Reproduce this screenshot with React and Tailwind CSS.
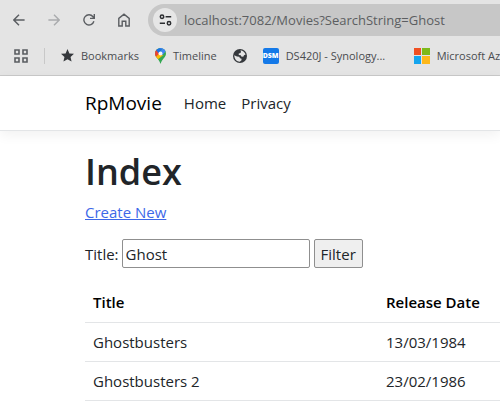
import React from "react";

const movies = [
  { title: "Ghostbusters", date: "13/03/1984" },
  { title: "Ghostbusters 2", date: "23/02/1986" },
];

function BackIcon() {
  return (
    <svg className="size-3" viewBox="0 0 12 12" fill="none" stroke="currentColor" strokeWidth="1.4">
      <path d="M11.6 6H1M6 .8.8 6 6 11.2" />
    </svg>
  );
}

function ForwardIcon() {
  return (
    <svg className="size-3" viewBox="0 0 12 12" fill="none" stroke="currentColor" strokeWidth="1.4">
      <path d="M.4 6H11M6 .8 11.2 6 6 11.2" />
    </svg>
  );
}

function ReloadIcon() {
  return (
    <svg className="size-3" viewBox="0 0 12 12" fill="none" stroke="currentColor" strokeWidth="1.4">
      <path d="M10.9 7.3A5.1 5.1 0 1 1 10 2.7L11.3 4.4M11.3 0V4.4H7" />
    </svg>
  );
}

function HomeIcon() {
  return (
    <svg className="h-[14px] w-3" viewBox="0 0 12 14" fill="none" stroke="currentColor" strokeWidth="1.4">
      <path d="M.8 13V5.4L6 1.2l5.2 4.2V13H7.8V8.2H4.2V13Z" />
    </svg>
  );
}

function TuneIcon() {
  return (
    <svg className="h-3 w-[13px]" viewBox="0 0 13 12" fill="none" stroke="currentColor" strokeWidth="1.5">
      <circle cx="3" cy="2.7" r="1.7" />
      <path d="M6.6 2.7h5.6M.8 9.3h5.2" />
      <circle cx="10" cy="9.3" r="1.7" />
    </svg>
  );
}

function AppsIcon() {
  return (
    <svg className="size-[14px]" viewBox="0 0 14 14" fill="none" stroke="currentColor" strokeWidth="1.6">
      <path d="M1 1h4v4H1zM9 1h4v4H9zM1 9h4v4H1zM9 9h4v4H9z" />
    </svg>
  );
}

function StarIcon() {
  return (
    <svg className="size-[13px] text-[#35383c]" viewBox="0 0 24 24" fill="currentColor">
      <path d="m12 0 3.5 8.1 8.5.8-6.4 5.8 1.9 8.6L12 18.8l-7.5 4.5 1.9-8.6L0 8.9l8.5-.8Z" />
    </svg>
  );
}

function PinIcon() {
  return (
    <svg className="h-4 w-[11px]" viewBox="0 0 22 32">
      <defs>
        <clipPath id="pin-outline">
          <path d="M11 0A11 11 0 0 0 0 11c0 4 2 6.5 4.500 9.500S9.500 27 11 32c1.500-5 4-8.500 6.500-11.500S22 15 22 11A11 11 0 0 0 11 0Z" />
        </clipPath>
      </defs>
      <g clipPath="url(#pin-outline)">
        <path fill="#34a853" d="M0 0h22v32H0z" />
        <path fill="#fbbc04" d="M0 16 7 10l10 4L4 24H0z" />
        <path fill="#ea4335" d="M0 2 3 3l7 6-8 9H0z" />
        <path fill="#1a73e8" d="M2 4 7 0h8l-7 11z" />
        <path fill="#4285f4" d="M9 0h13v6l-8 9-5-6 5-6z" />
      </g>
      <circle cx="11" cy="11" r="4" fill="#f5f6f8" />
    </svg>
  );
}

function GlobeIcon() {
  return (
    <svg className="size-[14px] text-[#35383c]" viewBox="0 0 28 28">
      <circle cx="14" cy="14" r="14" fill="currentColor" />
      <path
        fill="#e4e4e4"
        d="M15 2.500c5 .5 9 4 10.200 8.500l-3.200 1.500-1.500 3-4-.5-1-2.500-4-.5v-3l3.500-1 1-2.500ZM2.500 12.500 8 15l4.500.5 1.500 3 3 1v3l-3.500 3C8 25.500 2.500 20 2.500 12.500Z"
      />
    </svg>
  );
}

function MicrosoftIcon() {
  return (
    <span className="grid size-4 shrink-0 grid-cols-2 gap-px">
      <span className="bg-[#f05022]" />
      <span className="bg-[#7db91a]" />
      <span className="bg-[#15a5ee]" />
      <span className="bg-[#fdb81b]" />
    </span>
  );
}

function ToolButton({ label, disabled, children }) {
  return (
    <button
      type="button"
      aria-label={label}
      disabled={disabled}
      className="flex h-8 w-[35px] items-center justify-center text-[#5a5d61] disabled:text-[#a9abad]"
    >
      {children}
    </button>
  );
}

function Bookmark({ icon, label, children }) {
  return (
    <a href="#" aria-label={label} className="flex shrink-0 items-center gap-[7px] whitespace-nowrap">
      {icon}
      {children}
    </a>
  );
}

function BrowserChrome() {
  return (
    <div className="overflow-hidden border-b border-[#c9c9c9] bg-[#e4e4e4] pt-1 pb-2 text-[#4a4c50]">
      <div className="flex items-center pl-px">
        <ToolButton label="Back"><BackIcon /></ToolButton>
        <ToolButton label="Forward" disabled><ForwardIcon /></ToolButton>
        <ToolButton label="Reload"><ReloadIcon /></ToolButton>
        <ToolButton label="Home"><HomeIcon /></ToolButton>
        <div className="ml-[7px] flex h-8 flex-1 items-center gap-[7px] rounded-l-full bg-[#c7c7c7] pl-[5px]">
          <button
            type="button"
            aria-label="View site information"
            className="flex size-6 shrink-0 items-center justify-center rounded-full bg-[#e6e6e6] text-[#2b2d30]"
          >
            <TuneIcon />
          </button>
          <input
            type="text"
            aria-label="Address"
            defaultValue="localhost:7082/Movies?SearchString=Ghost"
            className="w-full min-w-0 bg-transparent text-[13px] text-[#5c5e61] outline-none"
          />
        </div>
      </div>
      <nav aria-label="Bookmarks" className="mt-2 flex h-[23px] items-center pl-[14px] text-[11px]">
        <button type="button" aria-label="Apps" className="shrink-0 text-[#5a5d61]"><AppsIcon /></button>
        <span className="ml-4 h-4 w-px shrink-0 bg-[#c8c8c8]" />
        <div className="ml-4 flex gap-4">
          <Bookmark icon={<StarIcon />}>Bookmarks</Bookmark>
          <Bookmark icon={<PinIcon />}>Timeline</Bookmark>
          <Bookmark icon={<GlobeIcon />} label="Website" />
          <Bookmark
            icon={
              <span className="flex size-4 items-center justify-center rounded-xs bg-[#1479e8] text-[7px] font-extrabold text-white">
                DSM
              </span>
            }
          >
            <span className="w-28">DS420J - Synology...</span>
          </Bookmark>
          <Bookmark icon={<MicrosoftIcon />}>Microsoft Az</Bookmark>
        </div>
      </nav>
    </div>
  );
}

export default function App() {
  return (
    <div className="overflow-hidden bg-white font-['Open_Sans','Noto_Sans',sans-serif] text-[15px] leading-6 text-[#212529]">
      <BrowserChrome />
      <header className="flex h-[55px] items-center border-b border-[#e3e5e7] pl-[85px] shadow-[0_4px_12px_rgba(0,0,0,0.06)]">
        <a href="#" className="text-[19px] text-black">RpMovie</a>
        <nav className="ml-[22px] flex gap-[15px]">
          <a href="#">Home</a>
          <a href="#">Privacy</a>
        </nav>
      </header>
      <main className="pt-[17px] pl-[85px]">
        <h1 className="text-[36px] leading-[48px] font-semibold">Index</h1>
        <p className="mt-1">
          <a href="#" className="text-[#3d68e8] underline">Create New</a>
        </p>
        <form className="mt-[15px] flex items-center" onSubmit={(e) => e.preventDefault()}>
          <label htmlFor="title">Title:</label>
          <input
            id="title"
            type="text"
            defaultValue="Ghost"
            className="ml-[3px] h-[29px] w-[188px] rounded-xs border border-[#8f8f8f] px-[3px]"
          />
          <button type="submit" className="ml-1 h-[29px] rounded-xs border border-[#8f8f8f] bg-[#efefef] px-[6px]">
            Filter
          </button>
        </form>
        <table className="mt-[15px] w-full table-fixed text-left">
          <thead>
            <tr className="h-[39px] border-b border-[#e3e5e7] text-black">
              <th className="w-[293px] px-2 font-semibold">Title</th>
              <th className="px-2 font-semibold whitespace-nowrap">Release Date</th>
            </tr>
          </thead>
          <tbody>
            {movies.map((movie) => (
              <tr key={movie.title} className="h-[39px] border-b border-[#e3e5e7]">
                <td className="px-2">{movie.title}</td>
                <td className="px-2">{movie.date}</td>
              </tr>
            ))}
          </tbody>
        </table>
      </main>
    </div>
  );
}
